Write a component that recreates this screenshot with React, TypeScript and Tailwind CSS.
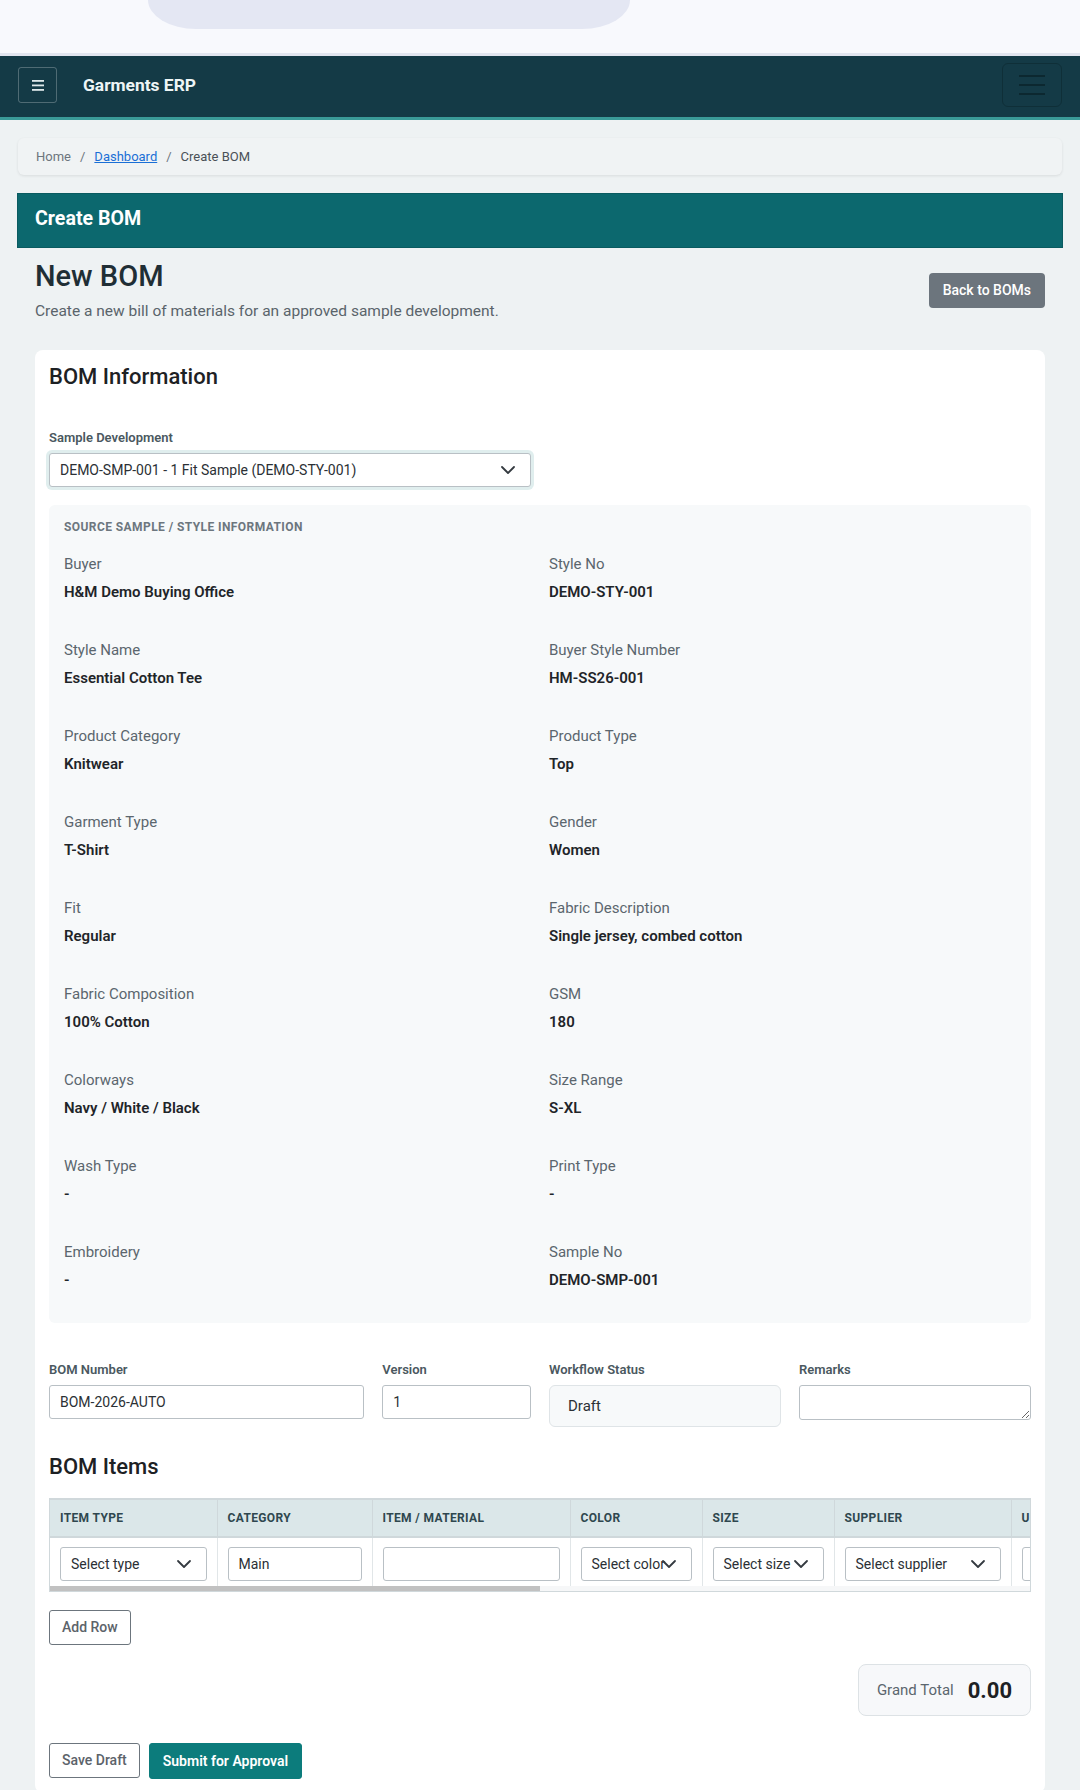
import React from "react";

type Field = { label: string; value: string };

const sourceFields: Field[] = [
  { label: "Buyer", value: "H&M Demo Buying Office" },
  { label: "Style No", value: "DEMO-STY-001" },
  { label: "Style Name", value: "Essential Cotton Tee" },
  { label: "Buyer Style Number", value: "HM-SS26-001" },
  { label: "Product Category", value: "Knitwear" },
  { label: "Product Type", value: "Top" },
  { label: "Garment Type", value: "T-Shirt" },
  { label: "Gender", value: "Women" },
  { label: "Fit", value: "Regular" },
  { label: "Fabric Description", value: "Single jersey, combed cotton" },
  { label: "Fabric Composition", value: "100% Cotton" },
  { label: "GSM", value: "180" },
  { label: "Colorways", value: "Navy / White / Black" },
  { label: "Size Range", value: "S-XL" },
  { label: "Wash Type", value: "-" },
  { label: "Print Type", value: "-" },
  { label: "Embroidery", value: "-" },
  { label: "Sample No", value: "DEMO-SMP-001" },
];

const columns = [
  { title: "Item Type", width: "w-[167px]" },
  { title: "Category", width: "w-[155px]" },
  { title: "Item / Material", width: "w-[198px]" },
  { title: "Color", width: "w-[132px]" },
  { title: "Size", width: "w-[132px]" },
  { title: "Supplier", width: "w-[177px]" },
  { title: "Unit", width: "w-[120px]" },
  { title: "Consumption", width: "w-[130px]" },
  { title: "Wastage %", width: "w-[120px]" },
  { title: "Total Qty", width: "w-[120px]" },
  { title: "Unit Price", width: "w-[130px]" },
  { title: "Amount", width: "w-[130px]" },
  { title: "Remarks", width: "w-[157px]" },
  { title: "Action", width: "w-[100px]" },
];

function Chevron() {
  return (
    <svg
      viewBox="0 0 16 16"
      className="h-[16px] w-[16px]"
      fill="none"
      stroke="#343a40"
      strokeWidth="1.8"
      strokeLinecap="round"
      strokeLinejoin="round"
    >
      <path d="m2 5 6 6 6-6" />
    </svg>
  );
}

function FakeSelect({ text, className = "" }: { text: string; className?: string }) {
  return (
    <div
      className={`relative flex h-[34px] items-center overflow-hidden whitespace-nowrap rounded-[3px] border border-[#b9c0c5] bg-white pl-[10px] text-[14px] text-[#2b3035] ${className}`}
    >
      {text}
      <span className="absolute right-[14px] top-1/2 -translate-y-1/2">
        <Chevron />
      </span>
    </div>
  );
}

function TextInput({ value = "" }: { value?: string }) {
  return (
    <input
      readOnly
      value={value}
      className="block h-[34px] w-full rounded-[3px] border border-[#b9c0c5] bg-white px-[10px] text-[14px] text-[#2b3035] outline-none"
    />
  );
}

function FormLabel({ children }: { children: React.ReactNode }) {
  return (
    <div className="text-[13px] font-semibold leading-[18px] text-[#4a5860]">
      {children}
    </div>
  );
}

function OutlineButton({ children }: { children: React.ReactNode }) {
  return (
    <button className="h-[35px] rounded-[3px] border border-[#6c757d] bg-white px-[12px] text-[14px] font-medium text-[#5c636a]">
      {children}
    </button>
  );
}

export default function App() {
  return (
    <div className="min-h-screen bg-[#eef2f3] pb-[40px] font-['Roboto',sans-serif] text-[#212529]">
      {/* top strip */}
      <div className="h-[53px] bg-[#f8f9fd]">
        <div className="ml-[148px] h-[29px] w-[482px] rounded-b-[48px_29px] bg-[#e4e7f3]" />
      </div>

      {/* navbar */}
      <nav className="flex h-[67px] items-center border-b-[3px] border-t-[3px] border-b-[#3a9a98] border-t-[#e2e5ef] bg-[#143a46] px-[18px] pb-[3px]">
        <button className="flex h-[36px] w-[39px] items-center justify-center rounded-[3px] border border-white/25">
          <svg viewBox="0 0 12 11" className="h-[11px] w-[12px]" fill="#dfe9eb">
            <rect x="0" y="0" width="12" height="1.8" />
            <rect x="0" y="4.5" width="12" height="1.8" />
            <rect x="0" y="9" width="12" height="1.8" />
          </svg>
        </button>
        <span className="ml-[26px] text-[17.4px] font-bold text-[#eef5f6]">Garments ERP</span>
        <button className="ml-auto flex h-[44px] w-[60px] flex-col items-center justify-center gap-[7px] rounded-[6px] border border-[#0f2f38]">
          <span className="h-[2px] w-[26px] bg-[#0c2830]" />
          <span className="h-[2px] w-[26px] bg-[#0c2830]" />
          <span className="h-[2px] w-[26px] bg-[#0c2830]" />
        </button>
      </nav>

      <div className="px-[17px] pt-[18px]">
        {/* breadcrumb */}
        <div className="mx-px flex h-[37px] items-center rounded-[6px] bg-[#f0f3f4] px-[18px] text-[13px] shadow-[0_1px_3px_rgba(0,0,0,0.09)]">
          <span className="text-[#6c757d]">Home</span>
          <span className="px-[9px] text-[#6c757d]">/</span>
          <a className="text-[#1a6fd6] underline">Dashboard</a>
          <span className="px-[9px] text-[#6c757d]">/</span>
          <span className="text-[#495057]">Create BOM</span>
        </div>

        {/* page header */}
        <div className="mt-[18px] flex h-[55px] items-center border border-[#0a5b60] bg-[#0c686e] px-[17px] pb-[3px] text-[19.6px] font-bold text-white">
          Create BOM
        </div>

        <div className="px-[18px]">
          <div className="mt-[11px] flex items-center justify-between">
            <div>
              <h1 className="text-[29px] font-medium leading-[35px] text-[#1f2e35]">New BOM</h1>
              <p className="mt-[6px] text-[15.5px] leading-[22px] text-[#5a646b]">
                Create a new bill of materials for an approved sample development.
              </p>
            </div>
            <button className="h-[35px] rounded-[4px] bg-[#6c757d] px-[14px] text-[14px] font-medium text-white">
              Back to BOMs
            </button>
          </div>

          {/* main card */}
          <div className="mt-[28px] rounded-[8px] bg-white p-[14px]">
            <h2 className="text-[22px] font-medium leading-[26px] text-[#1d2124]">BOM Information</h2>

            <div className="mt-[39px]">
              <FormLabel>Sample Development</FormLabel>
              <FakeSelect
                text="DEMO-SMP-001 - 1 Fit Sample (DEMO-STY-001)"
                className="mt-[6px] w-[482px] border-[#5aa8a6] shadow-[0_0_0_3px_rgba(12,124,124,0.13)]"
              />
            </div>

            {/* source info */}
            <div className="mt-[18px] rounded-[6px] bg-[#f7f9fa] px-[15px] pb-[32px] pt-[14px]">
              <div className="text-[12px] font-bold uppercase leading-[16px] tracking-[0.035em] text-[#6c767e]">
                Source Sample / Style Information
              </div>
              <div className="mt-[18px] grid grid-cols-2 gap-x-[18px] gap-y-[36px]">
                {sourceFields.map((f) => (
                  <div key={f.label}>
                    <div className="text-[15px] leading-[22px] text-[#5b666e]">{f.label}</div>
                    <div className="mt-[6px] text-[15px] font-semibold leading-[22px] text-[#1f2529]">
                      {f.value}
                    </div>
                  </div>
                ))}
              </div>
            </div>

            {/* bom header fields */}
            <div className="mt-[38px] grid grid-cols-12 items-start gap-x-[18px]">
              <div className="col-span-4">
                <FormLabel>BOM Number</FormLabel>
                <div className="mt-[6px]">
                  <TextInput value="BOM-2026-AUTO" />
                </div>
              </div>
              <div className="col-span-2">
                <FormLabel>Version</FormLabel>
                <div className="mt-[6px]">
                  <TextInput value="1" />
                </div>
              </div>
              <div className="col-span-3">
                <FormLabel>Workflow Status</FormLabel>
                <div className="mt-[6px] flex h-[42px] items-center rounded-[6px] border border-[#dfe4e7] bg-[#f7f9fa] px-[18px] text-[15px] text-[#2b3035]">
                  Draft
                </div>
              </div>
              <div className="col-span-3">
                <FormLabel>Remarks</FormLabel>
                <textarea
                  readOnly
                  rows={1}
                  className="mt-[6px] block h-[35px] w-full rounded-[3px] border border-[#b9c0c5] bg-white px-[10px] text-[14px] outline-none"
                />
              </div>
            </div>

            <h2 className="mt-[27px] text-[22px] font-medium leading-[26px] text-[#1d2124]">BOM Items</h2>

            {/* items table: horizontally scrolled, scrollbar drawn as a thin track */}
            <div className="mt-[18px] border border-t-2 border-[#d0d8db]">
              <div className="overflow-hidden">
                <table className="w-[1968px] table-fixed border-collapse">
                  <thead>
                    <tr className="bg-[#dbe7e9]">
                      {columns.map((c) => (
                        <th
                          key={c.title}
                          className={`${c.width} h-[37px] border-b-2 border-r border-b-[#cfd8db] border-r-[#cfd8db] px-[10px] text-left align-middle text-[12px] font-bold uppercase tracking-[0.03em] text-[#2f474f]`}
                        >
                          {c.title}
                        </th>
                      ))}
                    </tr>
                  </thead>
                  <tbody>
                    <tr className="bg-white">
                      <td className="border-r border-[#e1e6e8] px-[10px] pb-[5px] pt-[9px]">
                        <FakeSelect text="Select type" />
                      </td>
                      <td className="border-r border-[#e1e6e8] px-[10px] pb-[5px] pt-[9px]">
                        <TextInput value="Main" />
                      </td>
                      <td className="border-r border-[#e1e6e8] px-[10px] pb-[5px] pt-[9px]">
                        <TextInput />
                      </td>
                      <td className="border-r border-[#e1e6e8] px-[10px] pb-[5px] pt-[9px]">
                        <FakeSelect text="Select color" />
                      </td>
                      <td className="border-r border-[#e1e6e8] px-[10px] pb-[5px] pt-[9px]">
                        <FakeSelect text="Select size" />
                      </td>
                      <td className="border-r border-[#e1e6e8] px-[10px] pb-[5px] pt-[9px]">
                        <FakeSelect text="Select supplier" />
                      </td>
                      {columns.slice(6, 13).map((c) => (
                        <td key={c.title} className="border-r border-[#e1e6e8] px-[10px] pb-[5px] pt-[9px]">
                          <TextInput />
                        </td>
                      ))}
                      <td className="px-[10px] pb-[5px] pt-[9px]">
                        <button className="h-[34px] rounded-[3px] border border-[#dc3545] px-[10px] text-[13px] text-[#dc3545]">
                          Remove
                        </button>
                      </td>
                    </tr>
                  </tbody>
                </table>
              </div>
              <div className="h-[5px] bg-[#f6f7f8]">
                <div className="h-full w-[490px] bg-[#c1c1c1]" />
              </div>
            </div>

            <div className="mt-[18px]">
              <OutlineButton>Add Row</OutlineButton>
            </div>

            <div className="mt-[19px] flex justify-end">
              <div className="flex h-[52px] items-center gap-[14px] rounded-[8px] border border-[#dde2e5] bg-[#f7f8fa] px-[18px]">
                <span className="text-[15px] text-[#5b666e]">Grand Total</span>
                <span className="text-[22px] font-bold text-[#1d2124]">0.00</span>
              </div>
            </div>

            <div className="mt-[27px] flex gap-[9px]">
              <OutlineButton>Save Draft</OutlineButton>
              <button className="h-[36px] rounded-[3px] border border-[#0c7c7c] bg-[#0c7c7c] px-[13px] text-[14px] font-semibold text-white">
                Submit for Approval
              </button>
            </div>
          </div>
        </div>
      </div>
    </div>
  );
}
